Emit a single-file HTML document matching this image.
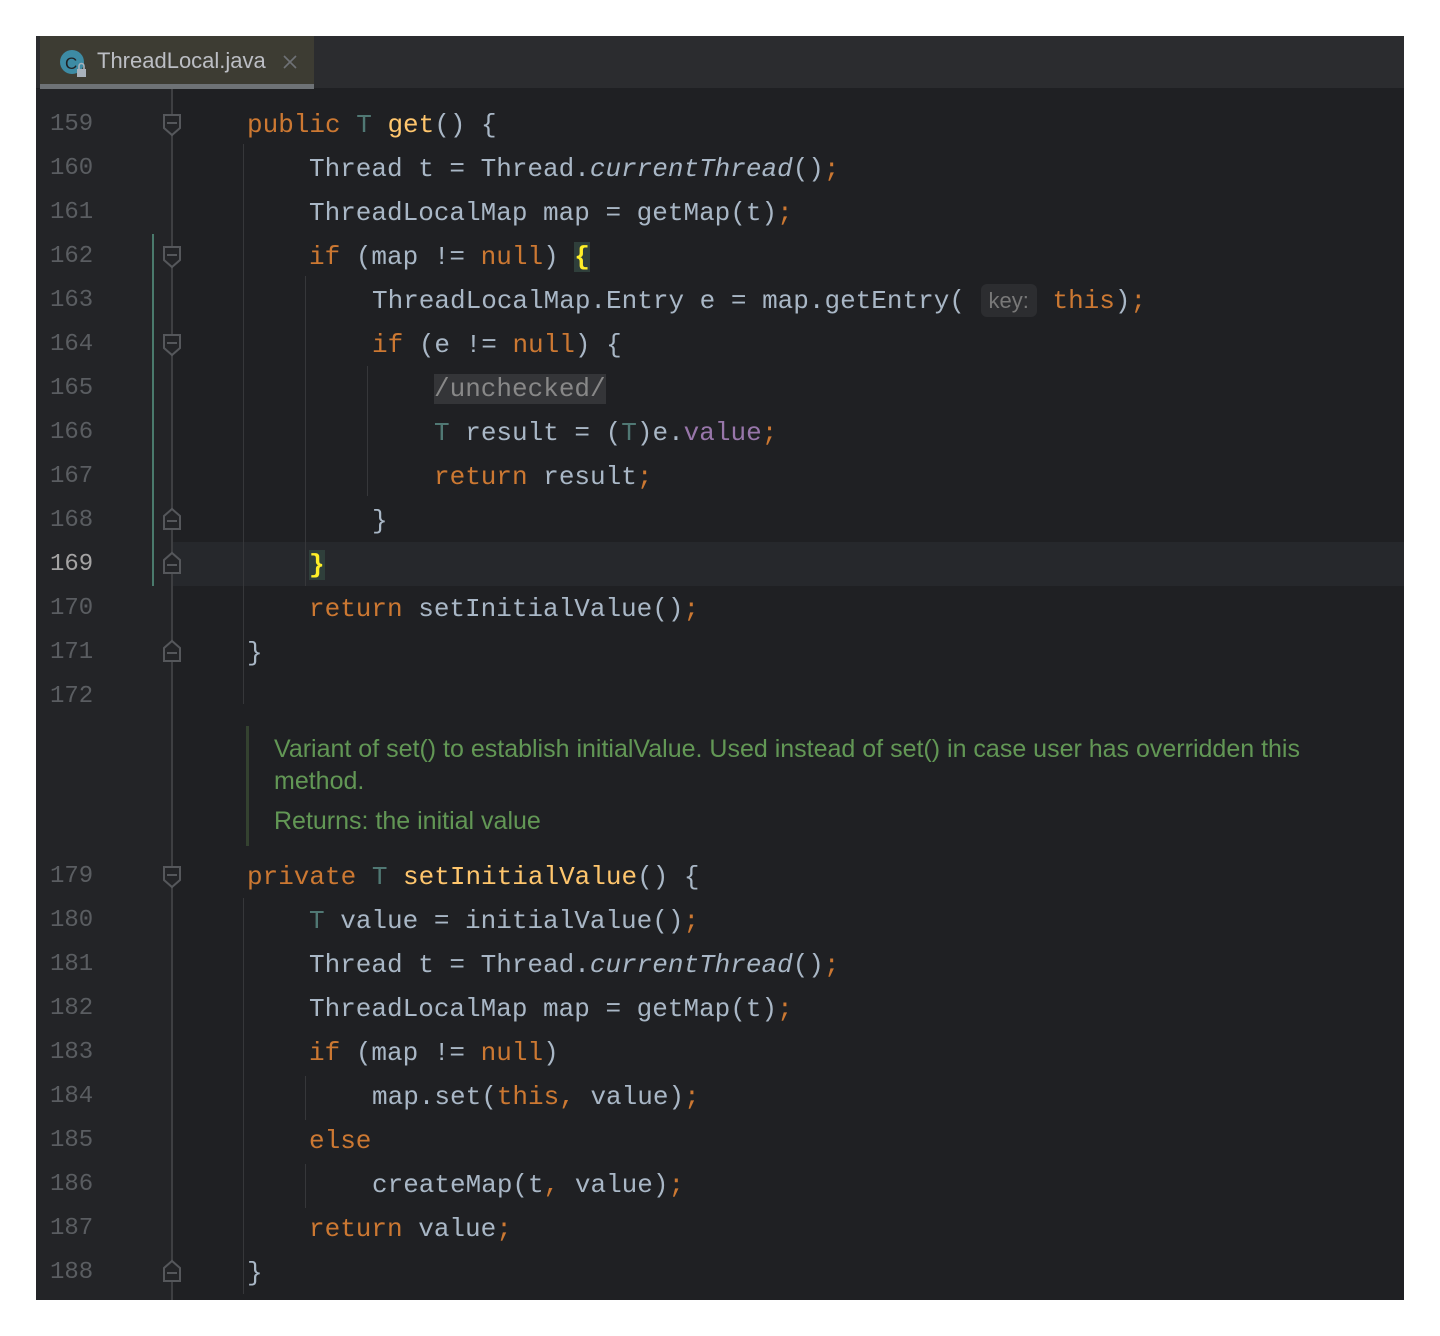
<!DOCTYPE html>
<html><head><meta charset="utf-8"><style>
*{margin:0;padding:0;box-sizing:border-box}
body{width:1440px;height:1336px;background:#fff;position:relative;overflow:hidden}
#win{position:absolute;left:36px;top:36px;width:1368px;height:1264px;background:#1f2023;overflow:hidden}
#tabbar{position:absolute;left:0;top:0;width:1368px;height:52px;background:#2b2c2f}
#tab{position:absolute;left:4px;top:0;width:274px;height:52px;background:#3d3c33}
#tabul{position:absolute;left:4px;top:48px;width:274px;height:5px;background:#6e7276}
#tabtxt{position:absolute;left:61px;top:12px;font:22px "Liberation Sans",sans-serif;color:#bcbec4}
#gutter{position:absolute;left:0;top:53px;width:136px;height:1211px;background:#232427}
.ln{position:absolute;left:14px;font:24px "Liberation Mono",monospace;color:#5a5d61;height:44px;line-height:44px}
.c{position:absolute;font:26px "Liberation Mono",monospace;color:#a9b7c6;white-space:pre;height:44px;line-height:44px}
.k{color:#cc7832}.tp{color:#507874}.m{color:#ffc66d}.i{font-style:italic}.f{color:#9876aa}
.br{color:#ffef28;font-weight:bold;background:#2f3f3b}
.hint{background:#2c2d30;color:#787878;font:22px "Liberation Sans",sans-serif;padding:4px 8px;border-radius:6px}
.fold{background:#343538;color:#888}
.g{position:absolute;width:1px;background:#36373a}
.doc{position:absolute;left:238px;font:25px "Liberation Sans",sans-serif;color:#629755;white-space:nowrap}
</style></head><body>
<div id="win">
<div id="tabbar"></div><div id="tab"></div><div id="tabul"></div>
<svg style="position:absolute;left:22px;top:13px" width="32" height="32"><circle cx="14" cy="13" r="12" fill="#3d8ba4"/><text x="7" y="20" font-family="Liberation Sans" font-size="17" fill="#1f2023">C</text><rect x="19" y="20" width="9" height="8" fill="#a9b2bc"/><path d="M21 20v-3a2.5 2.5 0 0 1 5 0v3" stroke="#a9b2bc" stroke-width="1.6" fill="none"/></svg>
<div id="tabtxt">ThreadLocal.java</div>
<svg style="position:absolute;left:246px;top:18px" width="16" height="16"><path d="M2 2L14 14M14 2L2 14" stroke="#6f7176" stroke-width="1.6"/></svg>
<div id="gutter"></div>
<div style="position:absolute;left:136px;top:506px;width:1232px;height:44px;background:#26282c"></div>
<div style="position:absolute;left:116px;top:198px;width:2px;height:352px;background:#4a7a6c"></div>
<div style="position:absolute;left:135px;top:53px;width:2px;height:1211px;background:#3e3f42"></div>
<svg style="position:absolute;left:0;top:0" width="300" height="1264">
<g stroke="#55575b" stroke-width="2" fill="#232427">
<path d="M128 79h16v13l-8 7l-8-7z"/><path d="M131 87h10"/>
<path d="M128 211h16v13l-8 7l-8-7z"/><path d="M131 219h10"/>
<path d="M128 299h16v13l-8 7l-8-7z"/><path d="M131 307h10"/>
<path d="M128 493h16v-13l-8-7l-8 7z"/><path d="M131 485h10"/>
<path d="M128 537h16v-13l-8-7l-8 7z"/><path d="M131 529h10"/>
<path d="M128 625h16v-13l-8-7l-8 7z"/><path d="M131 617h10"/>
<path d="M128 831h16v13l-8 7l-8-7z"/><path d="M131 839h10"/>
<path d="M128 1245h16v-13l-8-7l-8 7z"/><path d="M131 1237h10"/>
</g></svg>
<div class="g" style="left:207px;top:108px;height:560px"></div>
<div class="g" style="left:269px;top:240px;height:310px"></div>
<div class="g" style="left:331px;top:330px;height:130px"></div>
<div class="g" style="left:207px;top:862px;height:396px"></div>
<div class="g" style="left:269px;top:1040px;height:44px"></div>
<div class="g" style="left:269px;top:1128px;height:44px"></div>
<div style="position:absolute;left:210px;top:690px;width:3px;height:120px;background:#344230"></div>

<div class="ln" style="top:67px">159</div><div class="ln" style="top:111px">160</div><div class="ln" style="top:155px">161</div><div class="ln" style="top:199px">162</div><div class="ln" style="top:243px">163</div><div class="ln" style="top:287px">164</div><div class="ln" style="top:331px">165</div><div class="ln" style="top:375px">166</div><div class="ln" style="top:419px">167</div><div class="ln" style="top:463px">168</div><div class="ln" style="top:507px;color:#a4a3a3">169</div><div class="ln" style="top:551px">170</div><div class="ln" style="top:595px">171</div><div class="ln" style="top:639px">172</div>
<div class="ln" style="top:819px">179</div><div class="ln" style="top:863px">180</div><div class="ln" style="top:907px">181</div><div class="ln" style="top:951px">182</div><div class="ln" style="top:995px">183</div><div class="ln" style="top:1039px">184</div><div class="ln" style="top:1083px">185</div><div class="ln" style="top:1127px">186</div><div class="ln" style="top:1171px">187</div><div class="ln" style="top:1215px">188</div>

<div class="c" style="left:211px;top:67px"><span class="k">public </span><span class="tp">T</span> <span class="m">get</span>() {</div>
<div class="c" style="left:273px;top:111px">Thread t = Thread.<span class="i">currentThread</span>()<span class="k">;</span></div>
<div class="c" style="left:273px;top:155px">ThreadLocalMap map = getMap(t)<span class="k">;</span></div>
<div class="c" style="left:273px;top:199px"><span class="k">if </span>(map != <span class="k">null</span>) <span class="br">{</span></div>
<div class="c" style="left:336px;top:243px">ThreadLocalMap.Entry e = map.getEntry( <span class="hint">key:</span> <span class="k">this</span>)<span class="k">;</span></div>
<div class="c" style="left:336px;top:287px"><span class="k">if </span>(e != <span class="k">null</span>) {</div>
<div class="c" style="left:398px;top:331px"><span class="fold">/unchecked/</span></div>
<div class="c" style="left:398px;top:375px"><span class="tp">T</span> result = (<span class="tp">T</span>)e.<span class="f">value</span><span class="k">;</span></div>
<div class="c" style="left:398px;top:419px"><span class="k">return </span>result<span class="k">;</span></div>
<div class="c" style="left:336px;top:463px">}</div>
<div class="c" style="left:273px;top:507px"><span class="br">}</span></div>
<div class="c" style="left:273px;top:551px"><span class="k">return </span>setInitialValue()<span class="k">;</span></div>
<div class="c" style="left:211px;top:595px">}</div>

<div class="doc" style="top:699px">Variant of set() to establish initialValue. Used instead of set() in case user has overridden this</div>
<div class="doc" style="top:731px">method.</div>
<div class="doc" style="top:771px">Returns: the initial value</div>

<div class="c" style="left:211px;top:819px"><span class="k">private </span><span class="tp">T</span> <span class="m">setInitialValue</span>() {</div>
<div class="c" style="left:273px;top:863px"><span class="tp">T</span> value = initialValue()<span class="k">;</span></div>
<div class="c" style="left:273px;top:907px">Thread t = Thread.<span class="i">currentThread</span>()<span class="k">;</span></div>
<div class="c" style="left:273px;top:951px">ThreadLocalMap map = getMap(t)<span class="k">;</span></div>
<div class="c" style="left:273px;top:995px"><span class="k">if </span>(map != <span class="k">null</span>)</div>
<div class="c" style="left:336px;top:1039px">map.set(<span class="k">this, </span>value)<span class="k">;</span></div>
<div class="c" style="left:273px;top:1083px"><span class="k">else</span></div>
<div class="c" style="left:336px;top:1127px">createMap(t<span class="k">, </span>value)<span class="k">;</span></div>
<div class="c" style="left:273px;top:1171px"><span class="k">return </span>value<span class="k">;</span></div>
<div class="c" style="left:211px;top:1215px">}</div>
</div>
</body></html>
